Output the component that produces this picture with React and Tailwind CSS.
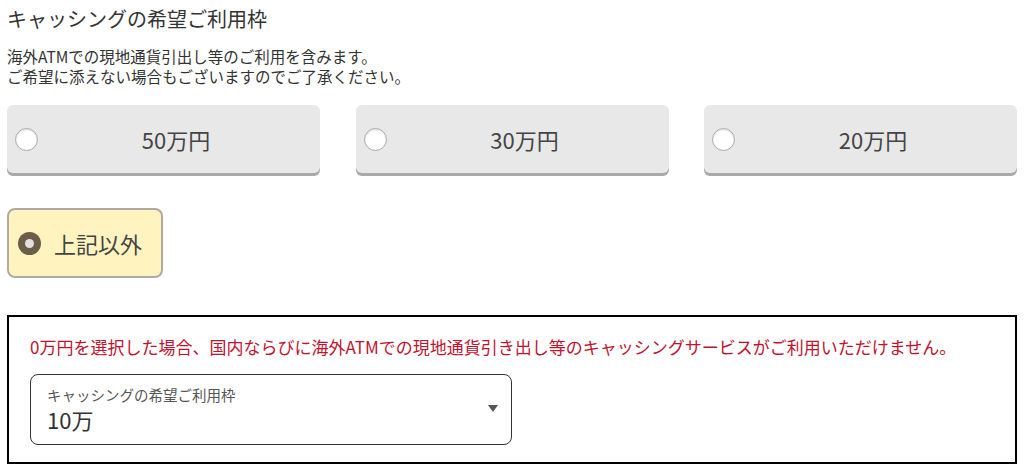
const jp = { fontFamily: '"Noto Sans CJK JP", "Noto Sans", sans-serif' };

const amounts = ['50万円', '30万円', '20万円'];

function Radio({ checked, className = '' }) {
  if (checked) {
    return (
      <span className={`flex h-[23px] w-[23px] shrink-0 items-center justify-center rounded-full bg-[#6b5d48] ${className}`}>
        <span className="block h-[9px] w-[9px] rounded-full bg-[#e2e0dc]" />
      </span>
    );
  }
  return (
    <span
      className={`block h-[23px] w-[23px] shrink-0 rounded-full border-[1.5px] border-[#ababab] bg-white shadow-[inset_0_1px_2px_rgba(0,0,0,0.15)] ${className}`}
    />
  );
}

export default function App() {
  return (
    <div className="min-h-screen bg-white px-[7px] text-[#333]" style={jp}>
      <h2 className="pt-[5px] text-[20px] font-normal leading-[28px] text-[#333]">
        キャッシングの希望ご利用枠
      </h2>
      <p className="mt-[13px] text-[15.5px] leading-[20px] text-[#333]">
        海外ATMでの現地通貨引出し等のご利用を含みます。
        <br />
        ご希望に添えない場合もございますのでご了承ください。
      </p>

      <div className="mt-[19px] flex justify-between gap-[34px]">
        {amounts.map((a) => (
          <label
            key={a}
            className="flex h-[68px] w-[313px] items-center rounded-[6px] bg-[#e8e8e8] shadow-[0_3px_0_#a9a9a9]"
          >
            <Radio checked={false} className="ml-[8px]" />
            <span className="flex-1 pr-[6px] text-center text-[22px] text-[#444]">{a}</span>
          </label>
        ))}
      </div>

      <label className="mt-[35px] flex h-[70px] w-[156px] items-center gap-[13px] rounded-[8px] border-2 border-[#b1ab9f] bg-[#fff3bf] pl-[9px]">
        <Radio checked />
        <span className="text-[22px] text-[#444]">上記以外</span>
      </label>

      <div className="mt-[37px] border-2 border-black px-[21px] pb-[17px] pt-[18px]">
        <p className="text-[17px] leading-[24px] text-[#c0132f]">
          0万円を選択した場合、国内ならびに海外ATMでの現地通貨引き出し等のキャッシングサービスがご利用いただけません。
        </p>
        <div className="mt-[15px] flex h-[71px] w-[482px] items-center justify-between rounded-[8px] border-[1.5px] border-[#333] pl-[16px] pr-[13px]">
          <div className="flex flex-col">
            <span className="text-[14.5px] leading-[17px] text-[#555]">キャッシングの希望ご利用枠</span>
            <span className="mt-[2px] text-[22px] leading-[28px] text-[#333]">10万</span>
          </div>
          <svg width="10" height="7" viewBox="0 0 10 7" className="mb-[2px]">
            <path d="M0 0h10L5 7z" fill="#555" />
          </svg>
        </div>
      </div>
    </div>
  );
}
